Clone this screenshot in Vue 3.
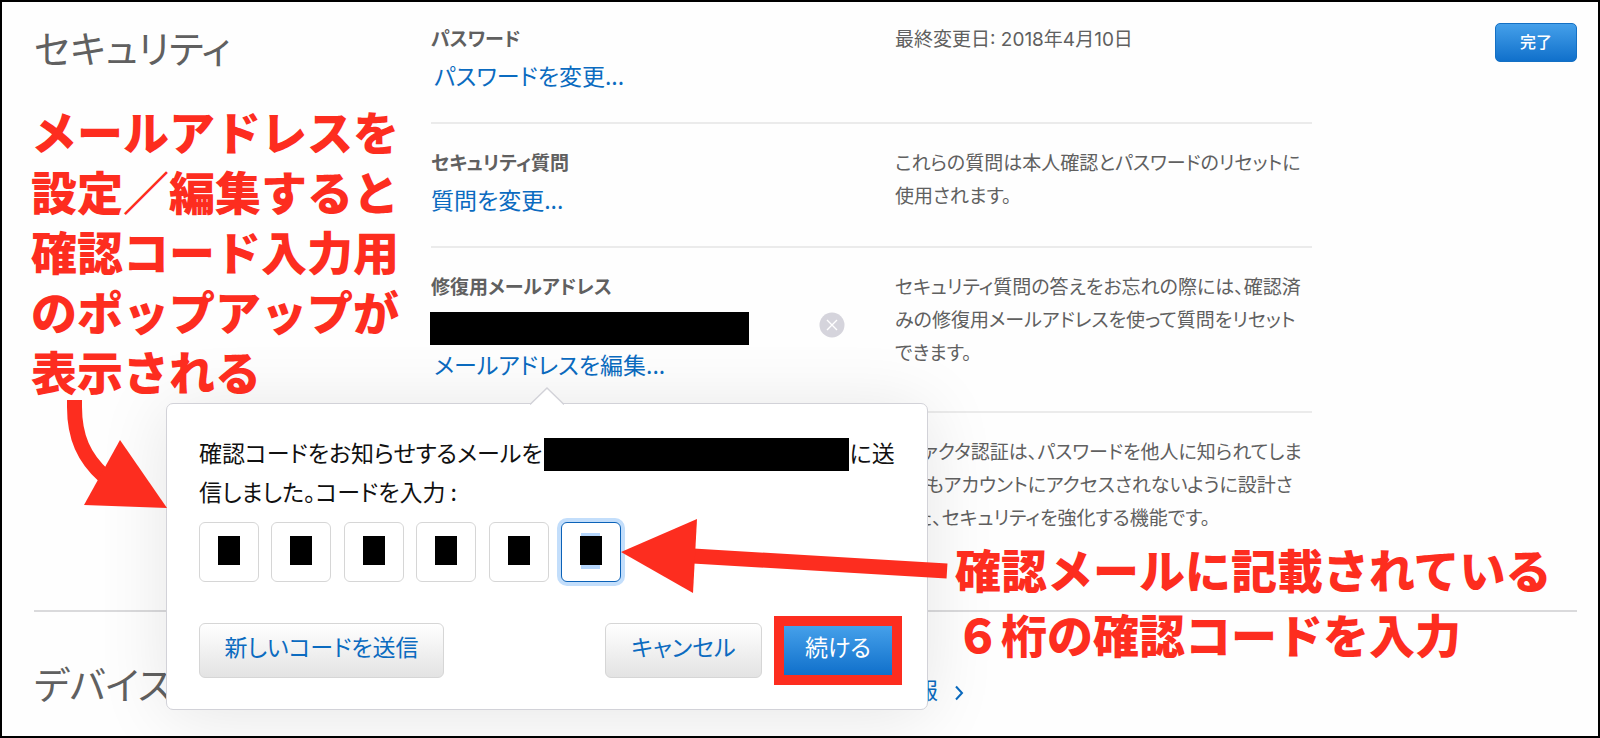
<script setup>
import { ref } from 'vue'

const digits = ref(['', '', '', '', '', ''])
const answerHelp = ['セキュリティ質問の答えをお忘れの際には、確認済', 'みの修復用メールアドレスを使って質問をリセット', 'できます。']
const questionHelp = ['これらの質問は本人確認とパスワードのリセットに', '使用されます。']
const factorHelp = ['2ファクタ認証は、パスワードを他人に知られてしま', 'ってもアカウントにアクセスされないように設計さ', 'れた、セキュリティを強化する機能です。']
const leftNote = ['メールアドレスを', '設定／編集すると', '確認コード入力用', 'のポップアップが', '表示される']
const rightNote = ['確認メールに記載されている', '６桁の確認コードを入力']
</script>

<template>
  <main class="page">
    <section class="section">
      <h1 class="title">セキュリティ</h1>
      <div class="rows">
        <div class="row first">
          <div class="main">
            <h2 class="label">パスワード</h2>
            <a class="link kana" href="#">パスワードを変更...</a>
          </div>
          <p class="help"><span>最終変更日: 2018年4月10日</span></p>
        </div>
        <div class="row">
          <div class="main">
            <h2 class="label">セキュリティ質問</h2>
            <a class="link" href="#">質問を変更...</a>
          </div>
          <p class="help"><span v-for="t in questionHelp" :key="t">{{ t }}</span></p>
        </div>
        <div class="row">
          <div class="main">
            <h2 class="label">修復用メールアドレス</h2>
            <div class="address">
              <span class="redacted"></span>
              <button class="remove" type="button" aria-label="削除">
                <svg viewBox="0 0 26 26" width="26" height="26">
                  <circle cx="13" cy="13" r="12.5" fill="#d5d4dc" />
                  <path d="M8 8L18 18M18 8L8 18" stroke="#fff" stroke-width="1.4" />
                </svg>
              </button>
            </div>
            <a class="link kana" href="#">メールアドレスを編集...</a>
          </div>
          <p class="help"><span v-for="t in answerHelp" :key="t">{{ t }}</span></p>
        </div>
        <div class="row last">
          <div class="main"></div>
          <p class="help"><span v-for="t in factorHelp" :key="t">{{ t }}</span></p>
        </div>
      </div>
      <div class="actions"><button class="done" type="button">完了</button></div>
    </section>

    <section class="section devices">
      <h1 class="title">デバイス</h1>
      <div class="more">
        <a class="link" href="#">情報
          <svg viewBox="0 0 10 16" width="10" height="16"><path d="M2 1.5L8 8L2 14.5" fill="none" stroke="#0b6bc0" stroke-width="2" /></svg>
        </a>
      </div>
    </section>

    <div class="popover" role="dialog" aria-label="確認コード">
      <svg class="caret" viewBox="0 0 34 18" width="34" height="18">
        <path d="M0 18L17 1L34 18Z" fill="#fff" />
        <path d="M0 17.5L17 1L34 17.5" fill="none" stroke="#d2d2d8" stroke-width="1.4" />
      </svg>
      <p class="message">確認コードをお知らせするメールを<span class="redacted"></span>に送<br>信しました。コードを入力 :</p>
      <div class="code">
        <input v-for="(d, i) in digits" :key="i" v-model="digits[i]" :class="['digit', { current: i === 5 }]" type="text" maxlength="1" :aria-label="`コード ${i + 1}`">
      </div>
      <div class="buttons">
        <button class="plain resend" type="button">新しいコードを送信</button>
        <button class="plain cancel" type="button">キャンセル</button>
        <button class="continue" type="button">続ける</button>
      </div>
    </div>

    <p class="note note-left"><span v-for="t in leftNote" :key="t">{{ t }}</span></p>
    <p class="note note-right"><span v-for="t in rightNote" :key="t">{{ t }}</span></p>
    <svg class="arrow arrow-left" viewBox="0 0 107 112" width="107" height="112">
      <path d="M14.5 0V7C14.5 37 24 58 44 76" fill="none" stroke="#fd2d1f" stroke-width="15" />
      <path d="M60 40L107 108L24 105Z" fill="#fd2d1f" />
    </svg>
    <svg class="arrow arrow-right" viewBox="0 0 328 76" width="328" height="76">
      <path d="M72 37L326 52" stroke="#fd2d1f" stroke-width="15" />
      <path d="M0 33L76 0L72 74Z" fill="#fd2d1f" />
    </svg>
  </main>
</template>

<style>
body {
  margin: 0;
}
</style>

<style scoped>
.page {
  position: relative;
  box-sizing: border-box;
  min-height: 100vh;
  overflow: hidden;
  padding: 0 21px 0 32px;
  border: 2px solid #000;
  background: #fefefe;
  color: #606060;
  font-family: "Noto Sans CJK JP", sans-serif;
  font-size: 19px;
  line-height: 33px;
  font-feature-settings: "palt";
  white-space: nowrap;
}
h1, h2, p {
  margin: 0;
}
button, input {
  font: inherit;
  font-feature-settings: inherit;
}
.section {
  display: grid;
  grid-template-columns: 397fr 881fr 265fr;
  border-bottom: 2px solid #dadadc;
}
.title {
  padding-top: 17px;
  font-size: 38px;
  font-weight: 400;
  line-height: 56px;
}
.row {
  display: grid;
  grid-template-columns: 464fr 417fr;
  padding: 21px 0 26px;
  border-bottom: 2px solid #ebebeb;
}
.row.first {
  padding-top: 19px;
}
.row.last {
  padding-bottom: 75px;
  border-bottom: 0;
}
.label {
  font-size: 19px;
  font-weight: 700;
}
.help {
  padding-top: 2px;
  font-family: Inter, "Noto Sans CJK JP", sans-serif;
}
.help span, .note span {
  display: block;
}
.link {
  display: block;
  color: #0b6bc0;
  font-size: 23px;
  line-height: 42px;
  text-decoration: none;
}
.link.kana {
  padding-left: 3px;
}
.redacted {
  display: inline-block;
  width: 319px;
  height: 33px;
  background: #000;
}
.address {
  display: flex;
  justify-content: space-between;
  margin: 10px 50px -2px -1px;
}
.remove {
  width: 26px;
  height: 26px;
  padding: 0;
  border: 0;
  background: none;
}
.remove svg {
  display: block;
}
.actions {
  padding-top: 21px;
  text-align: right;
}
.done {
  width: 82px;
  height: 39px;
  padding: 0 0 3px;
  border: 1px solid #1470c4;
  border-radius: 5px;
  background: linear-gradient(#45a0ea, #1070cb);
  color: #fff;
  font-size: 16px;
  font-weight: 500;
  line-height: 32px;
}
.devices {
  border: 0;
}
.devices .title {
  padding-top: 43px;
}
.more {
  padding: 56px 0 0 461px;
}
.more svg {
  margin-left: 11px;
  vertical-align: -2px;
}
.popover {
  position: absolute;
  top: 401px;
  left: 164px;
  box-sizing: border-box;
  width: 762px;
  padding: 29px 25px 24px 32px;
  border: 1px solid #d2d2d8;
  border-radius: 7px;
  background: #fff;
  box-shadow: 0 5px 70px rgba(0, 0, 0, .1);
}
.caret {
  position: absolute;
  top: -17px;
  left: 363px;
}
.message {
  color: #111;
  font-size: 23px;
  line-height: 39px;
}
.message .redacted {
  width: 305px;
  margin: 0 1px;
  vertical-align: -9px;
}
.code {
  display: flex;
  justify-content: space-between;
  width: 422px;
  margin-top: 11px;
}
.digit {
  box-sizing: border-box;
  width: 60px;
  height: 60px;
  border: 1px solid #d6d6d6;
  border-radius: 6px;
  outline: 0;
  background: linear-gradient(#000, #000) 50% 13px / 22px 29px no-repeat #fff;
  text-align: center;
}
.digit.current {
  border-color: #0b62b8;
  background: linear-gradient(#000, #000) 50% 13px / 22px 29px no-repeat, linear-gradient(#b5d6fc, #b5d6fc) 50% 10px / 19px 36px no-repeat #fff;
  box-shadow: 0 0 0 4px #c3defb;
}
.buttons {
  display: flex;
  align-items: center;
  margin-top: 34px;
}
.plain {
  height: 55px;
  padding: 0 0 8px;
  border: 1px solid #d6d6d6;
  border-radius: 6px;
  background: linear-gradient(#fff, #e3e3e3);
  color: #0b6bc0;
  font-size: 23px;
}
.resend {
  width: 245px;
}
.cancel {
  width: 157px;
  margin-left: auto;
}
.continue {
  width: 128px;
  height: 69px;
  margin-left: 12px;
  padding: 0 0 8px;
  border: 10px solid #fd2d1f;
  background: linear-gradient(#45a0ea, #1070cb) padding-box;
  color: #fff;
  font-size: 23px;
}
.note {
  position: absolute;
  color: #fd2d1f;
  font-size: 46px;
  font-weight: 900;
  font-feature-settings: normal;
}
.note-left {
  top: 98px;
  left: 29px;
  line-height: 60px;
}
.note-right {
  top: 534px;
  left: 953px;
  line-height: 65px;
}
.arrow {
  position: absolute;
}
.arrow-left {
  top: 398px;
  left: 58px;
}
.arrow-right {
  top: 517px;
  left: 619px;
}
</style>
